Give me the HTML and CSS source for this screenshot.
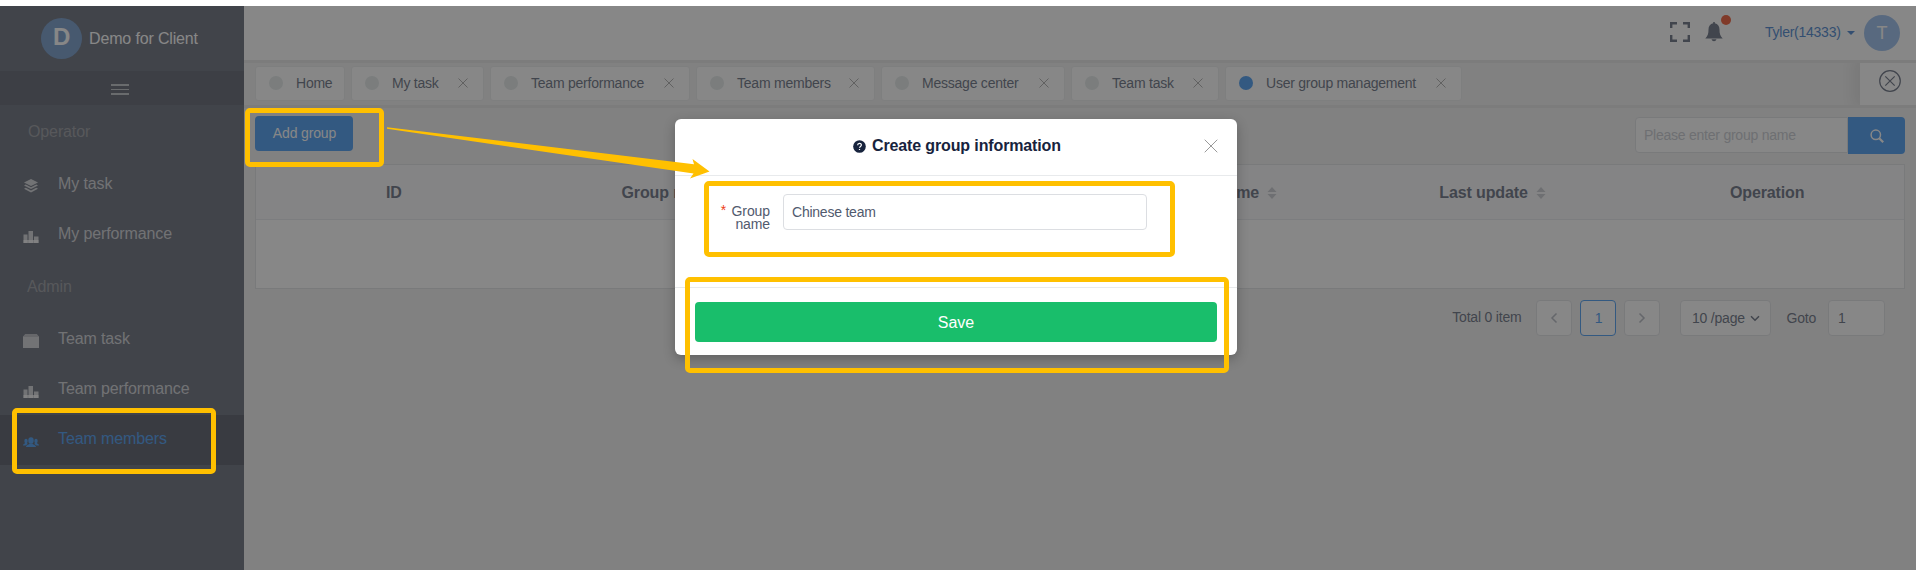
FILE: index.html
```html
<!DOCTYPE html>
<html lang="en">
<head>
<meta charset="utf-8">
<title>User group management</title>
<link rel="stylesheet" href="styles.css">
</head>
<body>
<div class="app">
  <aside class="sidebar">
    <div class="brand"><span class="brand-logo">D</span><span class="brand-name">Demo for Client</span></div>
    <div class="collapse"><span class="burger"><i></i><i></i><i></i></span></div>
    <div class="group-title">Operator</div>
    <a class="item"><svg class="icon" viewBox="0 0 16 16"><path d="M8 1 15 4.500 8 8 1 4.500Z"/><path d="M2.800 6.600 8 9.200l5.200-2.600L15 7.500 8 11 1 7.500Z"/><path d="M2.800 9.800 8 12.400l5.200-2.600 1.800.9L8 14.500 1 10.700Z"/></svg>My task</a>
    <a class="item"><svg class="icon" viewBox="0 0 16 16"><path d="M.5 6.500h4V15h-4zM5.500 3h4.500v12H5.500zM11 8.500h4.500V15H11z"/><path d="M.5 12h15v3H.5z"/></svg>My performance</a>
    <div class="group-title admin">Admin</div>
    <a class="item"><svg class="icon" viewBox="0 0 16 16"><path d="M2.200 1.200h11.600L15.500 2.800H.5zM0 3.200h16V15H0z"/></svg>Team task</a>
    <a class="item"><svg class="icon" viewBox="0 0 16 16"><path d="M.5 6.500h4V15h-4zM5.500 3h4.500v12H5.500zM11 8.500h4.500V15H11z"/><path d="M.5 12h15v3H.5z"/></svg>Team performance</a>
    <a class="item active"><svg class="icon" viewBox="0 0 16 16"><ellipse cx="8" cy="7.500" rx="2.700" ry="3.300"/><path d="M3 14c0-2.200 3-2 3.500-3.500h3c.5 1.500 3.500 1.300 3.500 3.500z"/><ellipse cx="3" cy="8" rx="1.700" ry="2.300"/><ellipse cx="13" cy="8" rx="1.700" ry="2.300"/><path d="M0 12.500c0-1.800 1.800-1.500 2.200-2.800h1.600l1 1.300-2.300 1.500zM16 12.500c0-1.800-1.800-1.500-2.200-2.800h-1.600l-1 1.300 2.300 1.500z"/></svg>Team members</a>
  </aside>
  <main class="main">
    <header class="topbar">
      <svg class="full" viewBox="0 0 20 20"><path d="M1.200 6V1.200H7M13 1.200h5.800V6M18.800 13v5.800H13M7 18.800H1.200V13"/></svg>
      <span class="bell"><svg viewBox="0 0 18 20"><path d="M8.200 0h1.600v1.200C13 2 14.500 4 14.500 7.500c0 4 .6 6.500 3.200 9H.3c2.600-2.500 3.200-5 3.200-9C3.500 4 5 2 8.200 1.200zM6.500 17.200h5c-.4 1.300-1.300 2-2.500 2s-2.100-.7-2.500-2z"/></svg><i class="badge"></i></span>
      <span class="user">Tyler(14333)</span><i class="caret"></i>
      <span class="avatar">T</span>
    </header>
    <nav class="tabs">
      <span class="tab t1"><i></i>Home</span>
      <span class="tab t2"><i></i>My task<svg class="x" viewBox="0 0 10 10"><path d="M.5.5l9 9M9.500.5l-9 9"/></svg></span>
      <span class="tab t3"><i></i>Team performance<svg class="x" viewBox="0 0 10 10"><path d="M.5.5l9 9M9.500.5l-9 9"/></svg></span>
      <span class="tab t4"><i></i>Team members<svg class="x" viewBox="0 0 10 10"><path d="M.5.5l9 9M9.500.5l-9 9"/></svg></span>
      <span class="tab t5"><i></i>Message center<svg class="x" viewBox="0 0 10 10"><path d="M.5.5l9 9M9.500.5l-9 9"/></svg></span>
      <span class="tab t6"><i></i>Team task<svg class="x" viewBox="0 0 10 10"><path d="M.5.5l9 9M9.500.5l-9 9"/></svg></span>
      <span class="tab t7 current"><i></i>User group management<svg class="x" viewBox="0 0 10 10"><path d="M.5.5l9 9M9.500.5l-9 9"/></svg></span>
      <span class="close-all"><svg viewBox="0 0 22 22"><circle cx="11" cy="11" r="10.300"/><path d="M6.300 6.300l9.400 9.400M15.700 6.300l-9.400 9.400"/></svg></span>
    </nav>
    <section class="content">
      <div class="tools">
        <button class="add">Add group</button>
        <div class="search"><span class="search-input">Please enter group name</span><span class="search-btn"><svg viewBox="0 0 14 14"><circle cx="5.800" cy="5.800" r="4.700"/><path class="handle" d="M9.200 9.200l4 4"/></svg></span></div>
      </div>
      <div class="table">
        <div class="thead">
          <span>ID</span><span>Group name</span><span>Creator</span>
          <span>Creation time<svg class="sort" viewBox="0 0 10 12"><path d="M5 0l4.500 5h-9zM5 12L.5 7h9z"/></svg></span>
          <span>Last update<svg class="sort" viewBox="0 0 10 12"><path d="M5 0l4.500 5h-9zM5 12L.5 7h9z"/></svg></span>
          <span>Operation</span>
        </div>
      </div>
      <div class="pager">
        <span class="total">Total 0 item</span>
        <span class="box prev"><svg viewBox="0 0 8 12"><path d="M6.500 1.500L2 6l4.500 4.500"/></svg></span>
        <span class="box on">1</span>
        <span class="box next"><svg viewBox="0 0 8 12"><path d="M1.500 1.500L6 6l-4.500 4.500"/></svg></span>
        <span class="box size">10 /page<svg viewBox="0 0 10 7"><path d="M1 1.200l4 4 4-4"/></svg></span>
        <span class="goto">Goto</span>
        <span class="box page">1</span>
      </div>
    </section>
  </main>
</div>
<div class="mask">
  <div class="modal">
    <div class="modal-head"><svg class="help" viewBox="0 0 14 14"><circle cx="7" cy="7" r="6.800"/><path d="M5 5.600C5 3 9 3 9 5.400c0 1.500-2 1.500-2 3M7 9.600v1.200"/></svg><span>Create group information</span><svg class="modal-x" viewBox="0 0 14 14"><path d="M.7.700l12.600 12.600M13.300.700L.7 13.300"/></svg></div>
    <div class="modal-body"><label class="label"><b>*</b>Group<br>name</label><span class="field">Chinese team</span></div>
    <div class="modal-foot"><button class="save">Save</button></div>
  </div>
</div>
<div class="mark mark-add"></div>
<div class="mark mark-menu"></div>
<div class="mark mark-field"></div>
<div class="mark mark-save"></div>
<svg class="arrow" viewBox="0 0 324 54"><path d="M1 2.200 308 39.300 306.500 34 323.500 46.500 304 53.500 307.500 48.500 1 3.800Z"/></svg>
</body>
</html>
```
FILE: styles.css
```css
* { box-sizing: border-box; }
body { margin: 0; padding-top: 6px; width: 1916px; height: 570px; overflow: hidden; position: relative; background: #fff; color: #515a6e; font: 14px "Liberation Sans", Arial, sans-serif; white-space: nowrap; }
svg { flex: none; }
button { border: 0; color: #fff; font-family: inherit; }
.app { display: flex; height: 564px; }

.sidebar { width: 244px; background: #515868; font-size: 16px; letter-spacing: -.12px; }
.brand { height: 65px; padding: 12px 0 12px 41px; display: flex; align-items: center; gap: 7px; color: #fff; }
.brand-name { letter-spacing: -.15px; }
.brand-logo { width: 41px; height: 41px; border-radius: 50%; background: #5f8dc4; text-align: center; font-size: 24px; font-weight: bold; line-height: 38px; }
.collapse { height: 34px; background: #484c5a; display: flex; justify-content: center; padding: 13px 4px 0 0; }
.burger { display: flex; flex-direction: column; gap: 3px; width: 18px; }
.burger i { height: 1.500px; background: #b5b8be; }
.group-title { height: 55px; padding: 18px 0 0 28px; line-height: 18px; color: #888b92; }
.group-title.admin { padding-left: 27px; }
.item { height: 50px; display: flex; align-items: center; gap: 19px; padding: 0 0 3px 23px; color: rgba(255,255,255,.7); }
.icon { width: 16px; height: 16px; fill: currentColor; margin-top: 5px; }
.item.active { background: #3e4351; color: #2d8cf0; }

.main { flex: 1; display: flex; flex-direction: column; background: #f0f0f0; }
.topbar { height: 54px; background: #fff; display: flex; align-items: center; justify-content: flex-end; padding: 0 16px 2px 0; }
.full { width: 20px; height: 20px; fill: none; stroke: #515a6e; stroke-width: 2.400; }
.bell { position: relative; margin: 0 42px 0 15px; width: 18px; height: 20px; }
.bell svg { width: 18px; height: 20px; fill: #515a6e; display: block; }
.badge { position: absolute; left: 16px; top: -7px; width: 10px; height: 10px; border-radius: 50%; background: #ed4014; }
.user { color: #2d72c8; width: 76px; letter-spacing: -.25px; }
.caret { border: 4px solid transparent; border-top-color: #2d72c8; border-bottom: 0; margin: 2px 9px 0 6px; }
.avatar { width: 36px; height: 36px; border-radius: 50%; background: #8ab4ea; color: #fff; font-size: 18px; line-height: 36px; text-align: center; margin-top: 2px; }

.tabs { height: 48px; border-top: 3px solid #e4e4e4; border-bottom: 3px solid #e4e4e4; padding-left: 11px; display: flex; align-items: flex-start; gap: 6px; letter-spacing: -.23px; }
.tab { height: 35px; margin-top: 3px; border: 1px solid #e8eaec; border-radius: 3px; background: #fff; display: flex; align-items: center; padding: 0 13px 1px 13px; }
.tab i { flex: none; width: 14px; height: 14px; border-radius: 50%; background: #e0e6e6; margin: 0 13px 1px 0; }
.tab .x { width: 10px; height: 10px; stroke: #a0a0a0; margin-left: auto; margin-right: 2px; }
.tab.current i { background: #2d8cf0; }
.tab.t1 { width: 90px; padding-right: 0; } .t2 { width: 133px; } .t3 { width: 200px; } .t4 { width: 179px; } .t5 { width: 184px; } .t6 { width: 148px; } .t7 { width: 237px; }
.close-all { margin-left: auto; width: 56px; height: 45px; margin-top: -3px; background: #fff; display: flex; align-items: center; justify-content: center; padding: 0 0 4px 4px; box-shadow: -3px 0 15px 3px rgba(0,0,0,.1); clip-path: inset(3px 0 0 -20px); }
.close-all svg { width: 22px; height: 22px; fill: none; stroke: #515a6e; stroke-width: 1.200; }

.content { padding: 8px 11px 0; }
.tools { height: 48px; display: flex; justify-content: space-between; align-items: flex-start; }
.add { width: 98px; height: 35px; border-radius: 4px; background: #2d8cf0; font-size: 14px; padding: 0 0 2px 1px; letter-spacing: -.15px; }
.search { display: flex; margin-top: 1px; }
.search-input { width: 213px; height: 36px; border: 1px solid #dcdee2; border-radius: 4px 0 0 4px; background: #fff; color: #c0c4cb; padding-left: 8px; line-height: 35px; letter-spacing: -.24px; }
.search-btn { width: 57px; height: 37px; border-radius: 0 4px 4px 0; background: #2d8cf0; display: flex; align-items: center; justify-content: center; }
.search-btn svg { width: 14px; height: 14px; fill: none; stroke: #fff; stroke-width: 1.500; }
.search-btn .handle { stroke-width: 2.200; }
.table { height: 125px; border: 1px solid #dcdee2; background: #fff; }
.thead { height: 55px; background: #f8f8f9; border-bottom: 1px solid #e4e6ea; display: grid; grid-template-columns: repeat(6, 1fr); font-size: 16px; font-weight: bold; letter-spacing: -.12px; }
.thead span { display: flex; align-items: center; justify-content: center; padding: 2px 0 0 1px; }
.thead span:nth-child(2) { padding-right: 1px; }
.sort { width: 10px; height: 12px; margin-left: 8px; fill: #c0c3ca; }
.pager { display: flex; align-items: center; margin-top: 11px; padding-right: 20px; justify-content: flex-end; letter-spacing: -.2px; }
.box { height: 36px; width: 36px; border: 1px solid #dcdee2; border-radius: 4px; background: #fff; display: flex; align-items: center; justify-content: center; }
.box svg { fill: none; stroke: #aaaeb8; stroke-width: 1.500; }
.prev svg, .next svg { width: 8px; height: 12px; }
.total { margin: 0 15px 2px 0; }
.on { margin: 0 8px 0 8px; color: #2d8cf0; border-color: #2d8cf0; }
.size { width: 91px; margin-left: 20px; gap: 5px; }
.size svg { width: 10px; height: 7px; stroke: #515a6e; }
.goto { margin: 0 12px 0 15px; }
.page { width: 57px; justify-content: flex-start; padding-left: 9px; }

.mask { position: absolute; inset: 6px 0 0; background: rgba(55,55,55,.6); display: flex; align-items: flex-start; justify-content: center; padding: 113px 4px 0 0; }
.modal { width: 562px; height: 236px; border-radius: 6px; background: #fff; box-shadow: 0 4px 12px rgba(0,0,0,.25); color: #515a6e; }
.modal-head { height: 57px; border-bottom: 1px solid #e8eaec; display: flex; align-items: center; padding: 0 19px 2px 178px; font-size: 16px; font-weight: bold; color: #17233d; gap: 6px; letter-spacing: -.13px; }
.help { width: 13px; height: 13px; fill: #17233d; }
.help path { fill: none; stroke: #fff; stroke-width: 1.300; }
.modal-x { width: 14px; height: 14px; stroke: #999; margin-left: auto; }
.modal-body { height: 111px; padding: 18px 0 0 44px; display: flex; letter-spacing: -.1px; }
.label { width: 51px; text-align: right; line-height: 13px; padding-top: 11px; }
.label b { color: #ed4014; font: 14px "Liberation Mono", monospace; line-height: 10px; margin-right: 4px; }
.field { width: 364px; height: 36px; margin-left: 13px; border: 1px solid #dcdee2; border-radius: 4px; line-height: 35px; padding-left: 8px; letter-spacing: -.23px; }
.modal-foot { border-top: 1px solid #e8eaec; padding: 14px 20px 0; }
.save { display: block; width: 522px; height: 40px; border-radius: 4px; background: #19be6b; font-size: 16px; padding: 2px 0 0; }

.mark { position: absolute; border: 5px solid #ffc000; border-radius: 5px; }
.mark-add { left: 245px; top: 108px; width: 139px; height: 59px; }
.mark-menu { left: 12px; top: 408px; width: 204px; height: 66px; }
.mark-field { left: 704px; top: 181px; width: 471px; height: 76px; }
.mark-save { left: 685px; top: 277px; width: 544px; height: 96px; }
.arrow { position: absolute; left: 386px; top: 125px; width: 324px; height: 54px; fill: #ffc000; }
```
